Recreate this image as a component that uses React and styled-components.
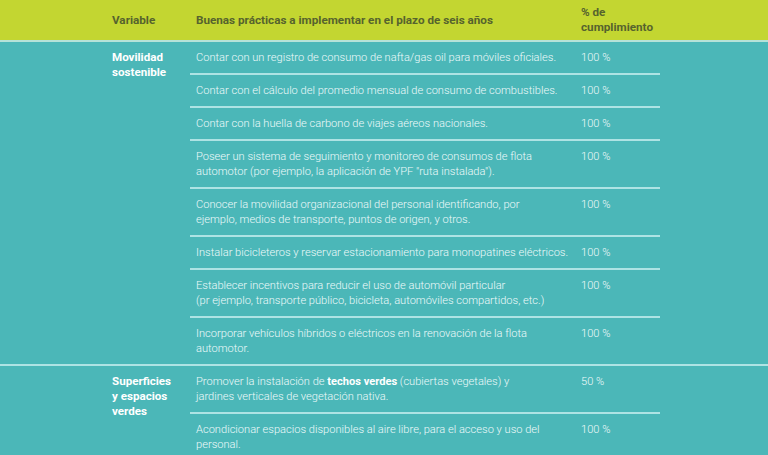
import styled, { createGlobalStyle } from 'styled-components';

const Global = createGlobalStyle`
  html, body { margin: 0; padding: 0; }
  body {
    background: #4bb7b8;
    font-family: Roboto, "Liberation Sans", sans-serif;
  }
`;

const Page = styled.div`
  width: 768px;
  height: 455px;
  overflow: hidden;
  background: #4bb7b8;
`;

const Header = styled.div`
  display: grid;
  grid-template-columns: 84px 385px 90px;
  align-items: center;
  height: 40px;
  padding-left: 112px;
  background: #c3d631;
  border-bottom: 2px solid #b5e2d8;
  color: #56632e;
  font-size: 11.7px;
  font-weight: 700;
  line-height: 15px;
`;

const Group = styled.div`
  display: grid;
  grid-template-columns: 78px 470px;
  padding-left: 112px;
  border-bottom: 2px solid #aee3e4;
`;

const VarName = styled.div`
  padding-top: 8px;
  color: #fff;
  font-size: 11.6px;
  font-weight: 700;
  line-height: 15px;
`;

const Rows = styled.div`
  display: flex;
  flex-direction: column;
`;

const Row = styled.div`
  display: grid;
  grid-template-columns: 385px 85px;
  padding: 8px 0 8px 6px;
  border-bottom: ${(p) => (p.$last ? 'none' : '2px solid #aee3e4')};
  color: #eefafa;
  font-size: 11.1px;
  font-weight: 300;
  line-height: 15px;
  white-space: nowrap;
  b { font-weight: 700; color: #fff; }
`;

const groups = [
  {
    name: ['Movilidad', 'sostenible'],
    rows: [
      ['Contar con un registro de consumo de nafta/gas oil para móviles oficiales.', '100 %'],
      ['Contar con el cálculo del promedio mensual de consumo de combustibles.', '100 %'],
      ['Contar con la huella de carbono de viajes aéreos nacionales.', '100 %'],
      ['Poseer un sistema de seguimiento y monitoreo de consumos de flota\nautomotor (por ejemplo, la aplicación de YPF "ruta instalada").', '100 %'],
      ['Conocer la movilidad organizacional del personal identificando, por\nejemplo, medios de transporte, puntos de origen, y otros.', '100 %'],
      ['Instalar bicicleteros y reservar estacionamiento para monopatines eléctricos.', '100 %'],
      ['Establecer incentivos para reducir el uso de automóvil particular\n(pr ejemplo, transporte público, bicicleta, automóviles compartidos, etc.)', '100 %'],
      ['Incorporar vehículos híbridos o eléctricos en la renovación de la flota\nautomotor.', '100 %'],
    ],
  },
  {
    name: ['Superficies', 'y espacios', 'verdes'],
    rows: [
      [
        <>Promover la instalación de <b>techos verdes</b> (cubiertas vegetales) y<br />jardines verticales de vegetación nativa.</>,
        '50 %',
      ],
      ['Acondicionar espacios disponibles al aire libre, para el acceso y uso del\npersonal.', '100 %'],
    ],
  },
];

const renderText = (t) =>
  typeof t === 'string'
    ? t.split('\n').map((l, i) => (
        <span key={i}>
          {i > 0 && <br />}
          {l}
        </span>
      ))
    : t;

export default function App() {
  return (
    <Page>
      <Global />
      <Header>
        <div>Variable</div>
        <div>Buenas prácticas a implementar en el plazo de seis años</div>
        <div>
          % de
          <br />
          cumplimiento
        </div>
      </Header>
      {groups.map((g, gi) => (
        <Group key={gi}>
          <VarName>
            {g.name.map((n, i) => (
              <div key={i}>{n}</div>
            ))}
          </VarName>
          <Rows>
            {g.rows.map((r, ri) => (
              <Row key={ri} $last={ri === g.rows.length - 1}>
                <div>{renderText(r[0])}</div>
                <div>{r[1]}</div>
              </Row>
            ))}
          </Rows>
        </Group>
      ))}
    </Page>
  );
}
